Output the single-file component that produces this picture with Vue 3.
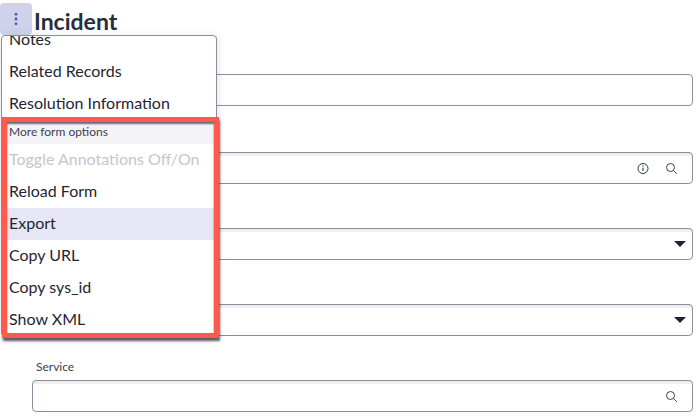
<script setup>
const topItems = ['Notes', 'Related Records', 'Resolution Information']
const moreItems = [
  { label: 'Toggle Annotations Off/On', cls: 'disabled' },
  { label: 'Reload Form', cls: '' },
  { label: 'Export', cls: 'active' },
  { label: 'Copy URL', cls: '' },
  { label: 'Copy sys_id', cls: '' },
  { label: 'Show XML', cls: '' }
]
</script>

<template>
  <div class="page">
    <header class="head">
      <button class="more" aria-label="More">
        <svg width="4" height="14" viewBox="0 0 4 14"><circle cx="2" cy="2.2" r="1.4"/><circle cx="2" cy="7" r="1.4"/><circle cx="2" cy="11.8" r="1.4"/></svg>
      </button>
      <h1>Incident</h1>
    </header>

    <form class="form">
      <div class="field first"><div class="box plain"></div></div>
      <div class="field">
        <div class="box">
          <svg class="ic info" width="13" height="13" viewBox="0 0 13 13"><circle cx="6" cy="6.5" r="5" fill="none" stroke="#2e3445" stroke-width="1"/><path d="M6 5.8v3.2" stroke="#2e3445" stroke-width="1.1"/><circle cx="6" cy="4" r=".7" fill="#2e3445"/></svg>
          <svg class="ic" width="13" height="13" viewBox="0 0 13 13"><circle cx="5.5" cy="5.5" r="4" fill="none" stroke="#3a4152" stroke-width="1"/><path d="M8.4 8.4l3.4 3.4" stroke="#3a4152" stroke-width="1"/></svg>
        </div>
      </div>
      <div class="field"><div class="box"><span class="caret"></span></div></div>
      <div class="field"><div class="box"><span class="caret"></span></div></div>
      <div class="field">
        <label>Service</label>
        <div class="box">
          <svg class="ic" width="13" height="13" viewBox="0 0 13 13"><circle cx="5.5" cy="5.5" r="4" fill="none" stroke="#3a4152" stroke-width="1"/><path d="M8.4 8.4l3.4 3.4" stroke="#3a4152" stroke-width="1"/></svg>
        </div>
      </div>
    </form>

    <div class="menu">
      <ul class="list clip">
        <li v-for="i in topItems" :key="i">{{ i }}</li>
      </ul>
      <div class="section">More form options</div>
      <ul class="list more-list">
        <li v-for="i in moreItems" :key="i.label" :class="i.cls">{{ i.label }}</li>
      </ul>
    </div>
    <div class="callout"></div>
  </div>
</template>

<style>
html, body { margin: 0; background: #fff; }
</style>

<style scoped>
.page {
  position: relative;
  width: 699px;
  height: 420px;
  overflow: hidden;
  background: #fff;
  font-family: Lato, "Liberation Sans", sans-serif;
  color: #1f2533;
}
.head {
  display: flex;
  align-items: center;
  gap: 2px;
  padding: 3px 0 0 0;
  height: 32px;
}
.more {
  width: 32px;
  height: 32px;
  margin: 0;
  padding: 0;
  border: 0;
  border-radius: 4px;
  background: #d0d2ec;
  display: flex;
  align-items: center;
  justify-content: center;
}
.more svg { fill: #4f52bd; }
h1 {
  margin: 0;
  padding-top: 3px;
  font-size: 23px;
  font-weight: 700;
  line-height: 26px;
  color: #262d3d;
}
.form {
  display: flex;
  flex-direction: column;
  gap: 44px;
  padding: 39px 6px 0 32px;
}
.field { position: relative; }
.field.first { margin-bottom: 2px; }
.field label {
  position: absolute;
  left: 4px;
  top: -21px;
  font-size: 12px;
  line-height: 16px;
  color: #3a4152;
}
.box {
  box-sizing: border-box;
  height: 32px;
  display: flex;
  align-items: center;
  justify-content: flex-end;
  gap: 15px;
  padding: 0 14px 0 0;
  border: 1px solid #8a8f9f;
  border-radius: 4px;
  background: linear-gradient(#eef0f1 0, #eef0f1 3px, #fff 3px);
}
.box.plain { background: #fff; }
.caret {
  width: 0;
  height: 0;
  margin-right: -8px;
  border-left: 6px solid transparent;
  border-right: 6px solid transparent;
  border-top: 6px solid #1c2230;
}
.menu {
  position: absolute;
  left: 1px;
  top: 35px;
  width: 216px;
  height: 302px;
  box-sizing: border-box;
  overflow: hidden;
  background: #fff;
  border: 1px solid #8a8f9f;
  border-radius: 4px;
  box-shadow: 0 2px 10px rgba(40, 45, 60, .16);
}
.list {
  margin: 0;
  padding: 0;
  list-style: none;
}
.clip { margin-top: -13px; }
.list li {
  height: 32px;
  line-height: 32px;
  padding-left: 7px;
  font-size: 16px;
  color: #1f2533;
  white-space: nowrap;
}
.more-list li { line-height: 30px; }
.list li.disabled { color: #c4c6cc; }
.list li.active { background: #e6e6f4; }
.section {
  height: 22px;
  line-height: 20px;
  margin-top: 3px;
  padding-left: 7px;
  font-size: 12px;
  color: #3a4152;
  background: #f4f4f7;
}
.callout {
  position: absolute;
  left: 2px;
  top: 117px;
  width: 217px;
  height: 221px;
  box-sizing: border-box;
  border: 5px solid #ff5a4d;
  box-shadow: 1px 3px 2px rgba(40, 45, 55, .75), inset 0 2px 2px rgba(40, 45, 55, .7);
  pointer-events: none;
}
</style>
